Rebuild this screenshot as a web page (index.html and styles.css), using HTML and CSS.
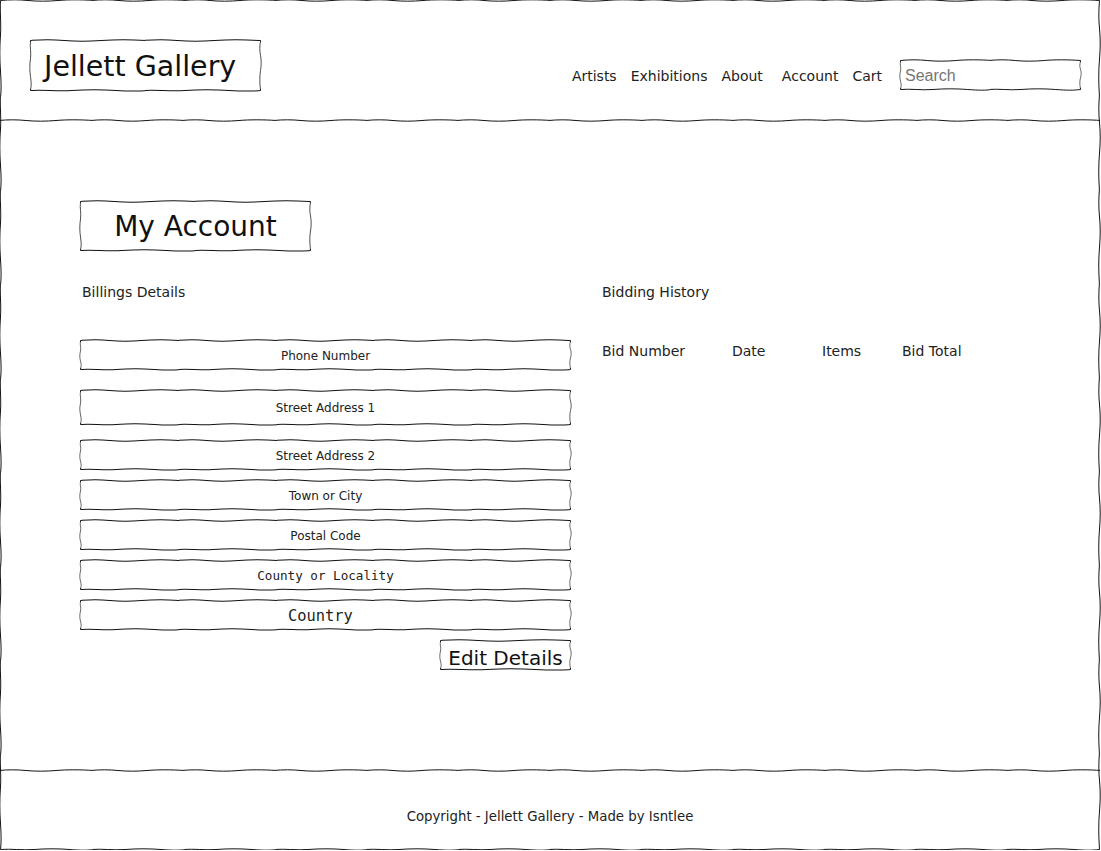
FILE: index.html
```html
<!DOCTYPE html>
<html lang="en">
<head>
    <meta charset="UTF-8">
    <meta name="viewport" content="width=device-width, initial-scale=1.0">
    <title>Jellett Gallery - My Account</title>
    <link rel="stylesheet" href="styles.css">
</head>
<body>

<div class="page">
    <header class="site-header">
        <div class="logo sketch">Jellett Gallery</div>
        <nav class="nav">
            <a href="#">Artists</a>
            <a href="#">Exhibitions</a>
            <a href="#" class="about">About</a>
            <a href="#">Account</a>
            <a href="#">Cart</a>
            <div class="search sketch">
                <input type="text" placeholder="Search">
            </div>
        </nav>
    </header>

    <main class="content">
        <h1 class="page-title sketch">My Account</h1>

        <div class="columns">
            <section class="billing">
                <h2 class="section-title">Billings Details</h2>
                <div class="fields">
                    <div class="field sketch">Phone Number</div>
                    <div class="field tall sketch">Street Address 1</div>
                    <div class="field sketch">Street Address 2</div>
                    <div class="field sketch">Town or City</div>
                    <div class="field sketch">Postal Code</div>
                    <div class="field mono sketch">County or Locality</div>
                    <div class="field mono big sketch">Country</div>
                    <button class="edit-btn sketch">Edit Details</button>
                </div>
            </section>

            <section class="bidding">
                <h2 class="section-title">Bidding History</h2>
                <div class="bid-head">
                    <span>Bid Number</span>
                    <span>Date</span>
                    <span>Items</span>
                    <span>Bid Total</span>
                </div>
            </section>
        </div>
    </main>

    <footer class="site-footer">
        Copyright - Jellett Gallery - Made by Isntlee
    </footer>
</div>

</body>
</html>
```

FILE: styles.css
```css
html, body {
    overflow: hidden;
}
body {
    margin: 0;
    font-family: 'DejaVu Sans', Verdana, sans-serif;
    color: #222;
    background: #fff;
}
.page {
    position: relative;
    width: 1100px;
    height: 850px;
    display: flex;
    flex-direction: column;
}

/* hand-drawn wobbly outline, shared by every wireframe line */
.page::before,
.sketch::before,
.site-header::after,
.site-footer::before {
    content: '';
    position: absolute;
    pointer-events: none;
    border-style: solid;
    border-width: 4px;
    border-image-source: url("data:image/svg+xml,%3Csvg xmlns='http://www.w3.org/2000/svg' width='100' height='100' fill='none' stroke='%23111' stroke-width='1'%3E%3Cpath d='M2.5 2.5C12 1.6 21 1.6 30 2.5S50 3.4 60 2.5 85 1.6 97.5 2.5'/%3E%3Cpath d='M2.5 97.5C13 96.6 24 98.4 36 97.5S60 96.6 72 97.5 90 98.4 97.5 97.5'/%3E%3Cpath d='M2.5 2.5C1.6 13 3.4 24 2.5 36S1.6 60 2.5 72 3.4 90 2.5 97.5'/%3E%3Cpath d='M97.5 2.5C96.6 12 96.6 21 97.5 30S98.4 50 97.5 60 96.6 85 97.5 97.5'/%3E%3C/svg%3E");
    border-image-slice: 4;
    border-image-repeat: round;
}
.page::before,
.sketch::before {
    inset: -2px;
}
.sketch {
    position: relative;
}

/* header */
.site-header {
    position: relative;
    height: 121px;
    flex-shrink: 0;
    display: flex;
    justify-content: space-between;
    align-items: flex-start;
    padding: 0 19px 0 30px;
    box-sizing: border-box;
}
.site-header::after {
    left: 0;
    right: 0;
    bottom: -1px;
    border-width: 4px 0 0;
}
.logo {
    margin-top: 40px;
    width: 231px;
    height: 51px;
    box-sizing: border-box;
    padding: 1px 0 0 14px;
    display: flex;
    align-items: center;
    font-size: 28.5px;
    color: #111;
}
.nav {
    margin-top: 60px;
    display: flex;
    align-items: center;
    gap: 14px;
}
.nav a {
    color: #222;
    text-decoration: none;
    font-size: 14px;
    padding-top: 2px;
}
.nav .about {
    margin-right: 5px;
}
.search {
    margin-left: 4px;
    width: 181px;
    height: 30px;
}
.search input {
    width: 100%;
    height: 100%;
    box-sizing: border-box;
    border: none;
    outline: none;
    background: transparent;
    padding: 1px 5px 0;
    font-family: 'Liberation Sans', Arial, sans-serif;
    font-size: 16px;
    color: #333;
}
.search input::placeholder {
    color: #767676;
}

/* main */
.content {
    flex: 1;
    padding: 80px 0 0 80px;
}
.page-title {
    margin: 0;
    width: 231px;
    height: 50px;
    display: flex;
    align-items: center;
    justify-content: center;
    font-size: 28px;
    font-weight: normal;
    color: #111;
    padding-top: 1px;
    box-sizing: border-box;
}
.columns {
    display: flex;
}
.billing {
    width: 491px;
}
.bidding {
    margin-left: 31px;
}
.section-title {
    margin: 33px 0 0;
    font-size: 14px;
    font-weight: normal;
    line-height: 17px;
    color: #222;
}
.billing .section-title {
    margin-left: 2px;
}
.fields {
    margin-top: 39px;
    display: flex;
    flex-direction: column;
    gap: 10px;
}
.field {
    height: 30px;
    display: flex;
    align-items: center;
    justify-content: center;
    font-size: 12px;
    color: #222;
    padding-top: 1px;
    box-sizing: border-box;
}
.fields .field:nth-child(2) {
    margin-top: 10px;
}
.fields .field:nth-child(3) {
    margin-top: 5px;
}
.field.tall {
    height: 35px;
}
.field.mono {
    font-family: 'DejaVu Sans Mono', monospace;
    font-size: 12.6px;
}
.field.big {
    font-size: 15.4px;
    justify-content: flex-start;
    padding: 2px 0 0 208px;
}
.edit-btn {
    align-self: flex-end;
    width: 131px;
    height: 30px;
    padding: 5px 0 0;
    border: none;
    background: transparent;
    font-family: 'DejaVu Sans', Verdana, sans-serif;
    font-size: 20px;
    color: #111;
    cursor: pointer;
}
.bid-head {
    margin-top: 42px;
    display: grid;
    grid-template-columns: 130px 90px 80px auto;
    font-size: 14px;
    color: #222;
}

/* footer */
.site-footer {
    position: relative;
    height: 80px;
    flex-shrink: 0;
    box-sizing: border-box;
    padding-top: 39px;
    text-align: center;
    font-size: 13.3px;
    color: #222;
}
.site-footer::before {
    left: 0;
    right: 0;
    top: -2px;
    border-width: 4px 0 0;
}
```
